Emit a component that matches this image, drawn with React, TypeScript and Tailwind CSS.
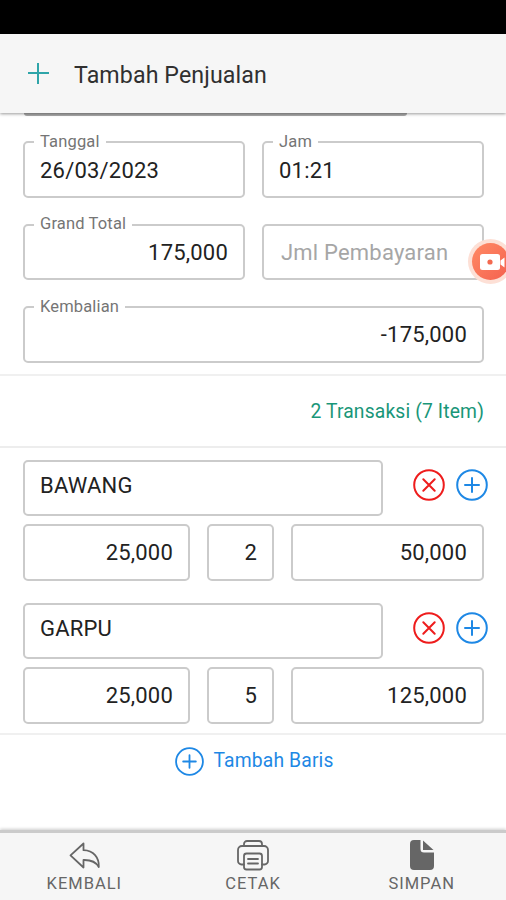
import clsx from "clsx";

type FieldProps = {
  value: string;
  label?: string;
  className?: string;
  right?: boolean;
  placeholder?: boolean;
};

const items = [
  { name: "BAWANG", price: "25,000", qty: "2", total: "50,000" },
  { name: "GARPU", price: "25,000", qty: "5", total: "125,000" },
];

function Field({ value, label, className, right, placeholder }: FieldProps) {
  return (
    <fieldset
      className={clsx(
        "relative flex h-[56.5px] min-w-0 items-center rounded-[5px] border-2 border-[#cbcbcb] px-[15px] text-[22px] tracking-[0.2px]",
        right && "justify-end",
        placeholder ? "text-[#a6a6a6]" : "text-[#222]",
        className
      )}
    >
      {label && (
        <span className="absolute -top-[13.5px] left-[9px] bg-white px-[6px] text-[16.5px] leading-6 tracking-[0.15px] text-[#757575]">
          {label}
        </span>
      )}
      <span className="leading-8">{value}</span>
    </fieldset>
  );
}

function CircleIcon({ size, cross }: { size: number; cross?: boolean }) {
  return (
    <svg width={size} height={size} viewBox="0 0 32 32" fill="none" stroke="currentColor" strokeWidth="2" strokeLinecap="round">
      <circle cx="16" cy="16" r="14.8" />
      {cross ? <path d="M10.3 10.3l11.4 11.4M21.7 10.3L10.3 21.7" /> : <path d="M16 9v14M9 16h14" />}
    </svg>
  );
}

function BackIcon() {
  return (
    <svg width="34" height="32" viewBox="0 0 34 32" fill="none" stroke="currentColor" strokeWidth="1.8" strokeLinejoin="round">
      <path d="M16.5 4.5L3.5 16.3L16.5 28.5V21C23 20.8 28.5 22 31.8 28C32.3 18.500 26.5 11.500 16.5 11.200Z" />
    </svg>
  );
}

function PrintIcon() {
  return (
    <svg width="34" height="32" viewBox="0 0 34 32" fill="none" stroke="currentColor" strokeWidth="1.8" strokeLinecap="round" strokeLinejoin="round">
      <path d="M8 7V5a3 3 0 0 1 3-3h12a3 3 0 0 1 3 3V7" />
      <path d="M8 25.500H5.500a3.500 3.500 0 0 1-3.500-3.500V11a4 4 0 0 1 4-4h22a4 4 0 0 1 4 4v11a3.500 3.500 0 0 1-3.500 3.500H26" />
      <rect x="8" y="14.500" width="18" height="16" rx="2.500" />
      <path d="M12 20h10M12 24.500h10" />
    </svg>
  );
}

function SaveIcon() {
  return (
    <svg width="26" height="32" viewBox="0 0 26 32" fill="currentColor">
      <path d="M5 1H11.500V10a3.500 3.500 0 0 0 3.500 3.500H25V27a4 4 0 0 1-4 4H5a4 4 0 0 1-4-4V5a4 4 0 0 1 4-4Z" />
      <path d="M14 1.500V11H24.500Z" />
    </svg>
  );
}

export default function App() {
  return (
    <div className="flex h-[900px] w-[506px] flex-col overflow-hidden bg-white font-['Roboto',sans-serif]">
      <div className="h-[34px] shrink-0 bg-black" />
      <header className="relative z-10 flex h-[79px] shrink-0 items-center bg-[#f6f6f6] pl-7 shadow-[0_1px_3px_rgba(0,0,0,0.4)]">
        <svg width="21" height="21" viewBox="0 0 21 21" stroke="#2fa5a9" strokeWidth="2">
          <path d="M10 0v21M0 10h21" />
        </svg>
        <h1 className="ml-[25px] pt-[4px] text-[23.2px] tracking-[0.1px] text-[#303030]">Tambah Penjualan</h1>
      </header>

      <main className="relative flex grow flex-col">
        <div className="ml-6 h-[3px] w-[383px] shrink-0 rounded-b bg-[#aaa]" />
        <section className="grid shrink-0 grid-cols-2 gap-x-[17px] gap-y-[26px] border-b-2 border-[#f0f0f0] pt-[25px] pr-[22px] pb-[11px] pl-[23px]">
          <Field label="Tanggal" value="26/03/2023" className="pt-[3px]" />
          <Field label="Jam" value="01:21" className="pt-[3px]" />
          <Field label="Grand Total" value="175,000" right className="pt-[2px]" />
          <Field value="Jml Pembayaran" placeholder className="pt-[2px] pl-[17px]" />
          <Field label="Kembalian" value="-175,000" right className="col-span-2 pt-[2px]" />
        </section>

        <p className="flex h-[72px] shrink-0 items-center justify-end border-b-2 border-[#ededed] pt-[3px] pr-[22px] text-[19.3px] tracking-[0.15px] text-[#199678]">
          2 Transaksi (7 Item)
        </p>

        <section className="flex shrink-0 flex-col gap-[22px] border-b-2 border-[#f0f0f0] pt-[12px] pr-[22px] pb-[9px] pl-[23px]">
          {items.map((item) => (
            <div key={item.name} className="flex flex-col gap-2">
              <div className="flex">
                <Field value={item.name} className="w-[360px] pb-[4px]" />
                <div className="-mr-1 ml-auto flex items-center gap-[11px] pb-[5px]">
                  <span className="text-[#ee1c1c]">
                    <CircleIcon size={32} cross />
                  </span>
                  <span className="text-[#1e88e5]">
                    <CircleIcon size={32} />
                  </span>
                </div>
              </div>
              <div className="flex gap-[17px]">
                <Field value={item.price} right className="w-[167px] pt-[2px]" />
                <Field value={item.qty} right className="w-[67px] pt-[2px]" />
                <Field value={item.total} right className="grow pt-[2px]" />
              </div>
            </div>
          ))}
        </section>

        <button className="flex h-[53px] shrink-0 items-center justify-center gap-[9px] pl-[3px] text-[19.3px] tracking-[0.15px] text-[#1e88e5]">
          <CircleIcon size={29} />
          Tambah Baris
        </button>

        <div className="absolute top-[126px] left-[468px] flex size-[45px] items-center justify-center rounded-full bg-[#fde0d6]">
          <div className="flex size-[37px] items-center justify-center rounded-full bg-gradient-to-br from-[#ff8a65] to-[#f4604f]">
            <svg width="28" height="20" viewBox="0 0 28 20" fill="#fff">
              <rect x="3" y="2" width="20" height="16" rx="2.5" />
              <path d="M23.5 8.5l4-3v10l-4-3Z" />
              <circle cx="13" cy="10" r="2.6" fill="#f4694f" />
            </svg>
          </div>
        </div>
      </main>

      <nav className="grid h-[70px] shrink-0 grid-cols-3 border-t-[3px] border-[#cbcbcb] bg-[#f6f6f6] text-[16.5px] tracking-[1px] text-[#666] shadow-[0_-1px_3px_rgba(0,0,0,0.2)]">
        <div className="flex flex-col items-center pt-[6px]">
          <BackIcon />
          <span className="pt-px leading-6">KEMBALI</span>
        </div>
        <div className="flex flex-col items-center pt-[6px]">
          <PrintIcon />
          <span className="pt-px leading-6">CETAK</span>
        </div>
        <div className="flex flex-col items-center pt-[6px]">
          <SaveIcon />
          <span className="pt-px leading-6">SIMPAN</span>
        </div>
      </nav>
    </div>
  );
}
